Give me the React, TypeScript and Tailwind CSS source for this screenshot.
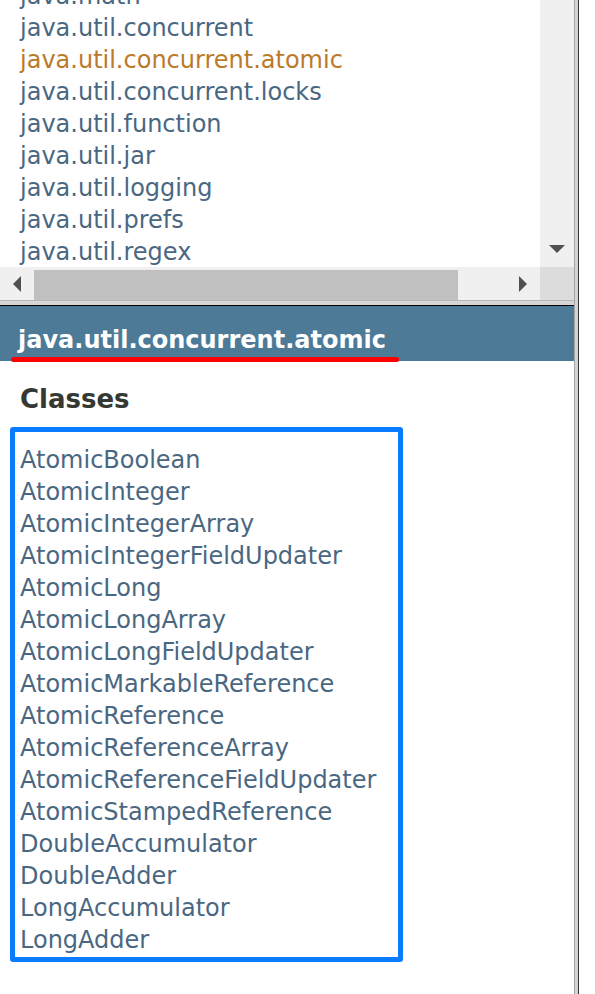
import React from "react";

const packages = [
  "java.math",
  "java.util.concurrent",
  "java.util.concurrent.atomic",
  "java.util.concurrent.locks",
  "java.util.function",
  "java.util.jar",
  "java.util.logging",
  "java.util.prefs",
  "java.util.regex",
];

const classes = [
  "AtomicBoolean",
  "AtomicInteger",
  "AtomicIntegerArray",
  "AtomicIntegerFieldUpdater",
  "AtomicLong",
  "AtomicLongArray",
  "AtomicLongFieldUpdater",
  "AtomicMarkableReference",
  "AtomicReference",
  "AtomicReferenceArray",
  "AtomicReferenceFieldUpdater",
  "AtomicStampedReference",
  "DoubleAccumulator",
  "DoubleAdder",
  "LongAccumulator",
  "LongAdder",
];

export default function App() {
  return (
    <div
      className="w-[595px] h-[994px] flex bg-white overflow-hidden"
      style={{ fontFamily: '"DejaVu Sans", "Liberation Sans", sans-serif' }}
    >
      <div className="w-[574px] flex flex-col">
        {/* top package list */}
        <div className="h-[267px] flex">
          <div className="w-[540px] overflow-hidden">
            <div className="-mt-[20px]">
              {packages.map((p) => (
                <div
                  key={p}
                  className={`h-[32px] leading-[32px] text-[24px] pl-[20px] whitespace-nowrap ${
                    p === "java.util.concurrent.atomic" ? "text-[#bb7a2a]" : "text-[#4a6782]"
                  }`}
                >
                  {p}
                </div>
              ))}
            </div>
          </div>
          <div className="w-[34px] bg-[#f0f0f0] flex flex-col justify-end items-center pb-[14px]">
            <svg width="16" height="8" viewBox="0 0 16 8">
              <polygon points="0,0 16,0 8,8" fill="#505050" />
            </svg>
          </div>
        </div>
        {/* horizontal scrollbar */}
        <div className="h-[33px] flex">
          <div className="w-[540px] bg-[#f0f0f0] flex items-center">
            <div className="w-[34px] h-full flex items-center justify-center">
              <svg width="8" height="16" viewBox="0 0 8 16">
                <polygon points="8,0 8,16 0,8" fill="#505050" />
              </svg>
            </div>
            <div className="w-[424px] h-[30px] mt-[2px] bg-[#c0c0c0]" />
            <div className="flex-1 h-full flex items-center justify-end pr-[13px]">
              <svg width="8" height="16" viewBox="0 0 8 16">
                <polygon points="0,0 0,16 8,8" fill="#505050" />
              </svg>
            </div>
          </div>
          <div className="w-[34px] bg-[#dcdcdc]" />
        </div>
        <div className="h-[5px] bg-[#d6d6d6] border-t border-[#b8b8b8]" />
        <div className="h-[1px] bg-black" />
        {/* header */}
        <div className="relative h-[55px] bg-[#4d7a97] pt-[18px] pl-[18px]">
          <div className="text-white font-bold text-[24px] leading-[32px] whitespace-nowrap">
            java.util.concurrent.atomic
          </div>
          <div className="absolute left-[11px] top-[51px] w-[388px] h-[5px] rounded-full bg-[#ff0000]" />
        </div>
        {/* classes */}
        <div className="pl-[20px] mt-[22px] text-[#353833] font-bold text-[26px] leading-[32px]">
          Classes
        </div>
        <div className="ml-[10px] mt-[12px] w-[393px] h-[535px] border-[5px] border-[#0a7cff] rounded-[3px] pt-[12px] pl-[5px]">
          {classes.map((c) => (
            <div
              key={c}
              className="h-[32px] leading-[32px] text-[24px] text-[#4a6782] whitespace-nowrap"
            >
              {c}
            </div>
          ))}
        </div>
      </div>
      <div className="w-[5px] h-full bg-[#d4d4d4] border-l border-[#a5a5a5] border-r border-r-[#333333]" />
      <div className="flex-1" />
    </div>
  );
}
